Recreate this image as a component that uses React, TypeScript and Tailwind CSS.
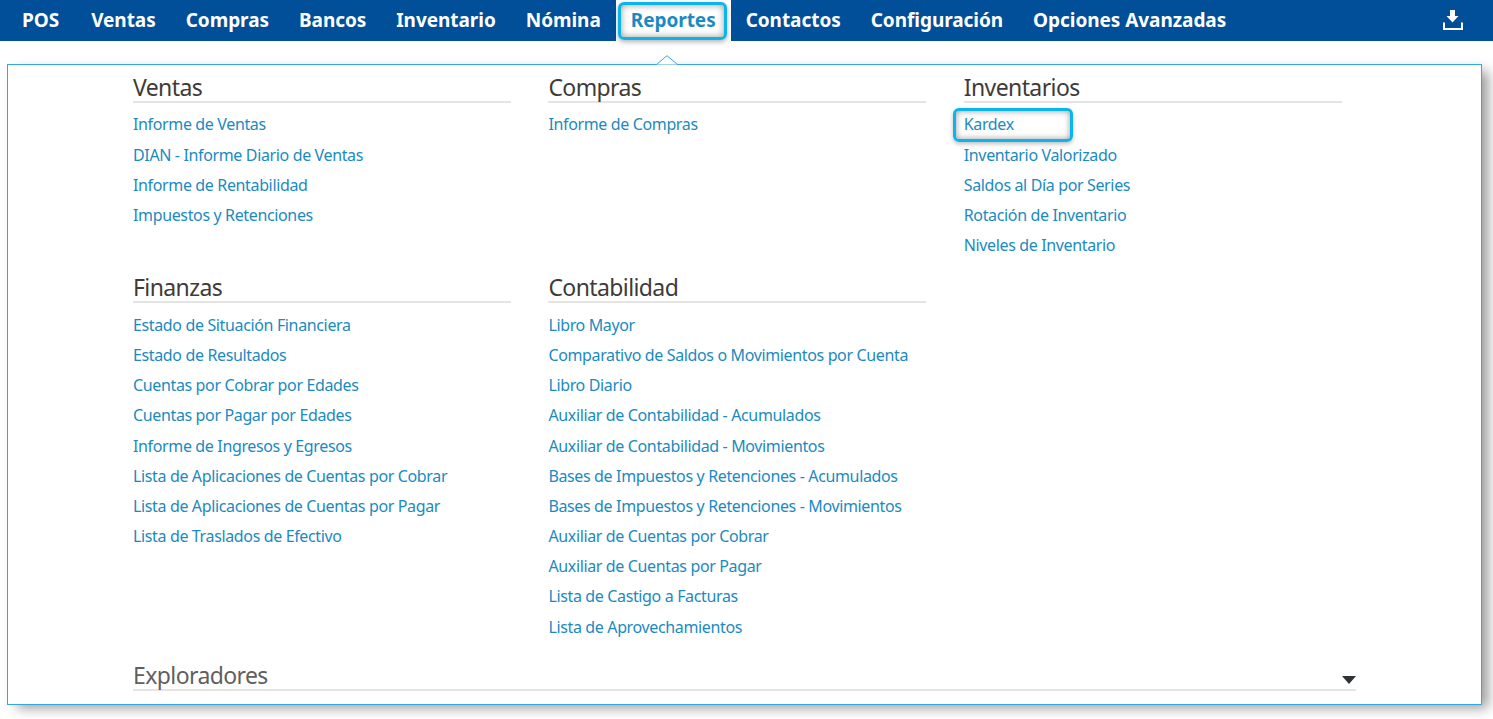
import React from 'react';

const font = "font-['Noto_Sans','Open_Sans',sans-serif]";

const navItems = ['POS', 'Ventas', 'Compras', 'Bancos', 'Inventario', 'Nómina', 'Reportes', 'Contactos', 'Configuración', 'Opciones Avanzadas'];

const Section: React.FC<{ title: string; links: string[]; highlight?: string }> = ({ title, links, highlight }) => (
  <div className="w-[378px]">
    <h3 className="h-[38px] pt-[6px] border-b-2 border-[#e6e3e3] text-[23px] leading-[32px] text-[#403b37] tracking-[-0.6px]">{title}</h3>
    <ul className="pt-[6.4px]">
      {links.map((l) => (
        <li key={l} className="relative h-[30.2px] text-[16px] leading-[30px] text-[#1b8ac0] tracking-[-0.36px] whitespace-nowrap">
          {l}
          {l === highlight && (
            <span className="absolute left-[-11px] top-[-1px] w-[120px] h-[34px] rounded-[6px] border-[3.5px] border-[#0ab4ec] shadow-[inset_0_0_6px_rgba(0,0,0,0.4),0_2px_4px_rgba(0,0,0,0.25)]" />
          )}
        </li>
      ))}
    </ul>
  </div>
);

export default function App() {
  return (
    <div className={`w-[1493px] h-[719px] overflow-hidden bg-white ${font}`}>
      {/* Top bar */}
      <nav className="h-[41px] bg-[#004f98] flex items-stretch pl-[7px] pr-[30px]">
        {navItems.map((n) =>
          n === 'Reportes' ? (
            <div key={n} className="relative z-10 bg-white px-[15px] flex items-center text-[19px] font-bold tracking-[-0.05px] text-[#1b8ac0]">
              {n}
              <span className="absolute left-[2px] top-[1.5px] w-[109px] h-[38px] rounded-[6px] border-[3.5px] border-[#0ab4ec] shadow-[inset_0_0_7px_rgba(0,0,0,0.4),0_2px_5px_rgba(0,0,0,0.3)]" />
            </div>
          ) : (
            <div key={n} className="px-[15px] first:pr-[17px] flex items-center text-[19px] font-bold tracking-[-0.05px] text-white">{n}</div>
          ),
        )}
        <div className="ml-auto flex items-center pb-[2px]">
          <svg width="20" height="20" viewBox="0 0 20 20" fill="white">
            <path d="M7 0h5v6h3.5L9.5 12.5 3.5 6H7z" />
            <path d="M0 12.5h2V18h16v-5.5h2V20H0z" />
          </svg>
        </div>
      </nav>

      {/* Dropdown panel */}
      <div className="relative ml-[7px] mt-[23px] w-[1475px] h-[641px] border border-[#35a7df] bg-white shadow-[8px_5px_12px_-2px_rgba(0,0,0,0.4)]">
        <svg className="absolute left-[647px] top-[-10px]" width="24" height="11" viewBox="0 0 24 11">
          <path d="M0 9.5h1.5L12 .7l10.5 8.8H24" fill="white" stroke="#35a7df" strokeWidth="1" />
        </svg>
        <div className="pl-[125px]">
          <div className="grid grid-cols-[415.4px_415.4px_378px] grid-rows-[200.4px_380px]">
            <Section title="Ventas" links={['Informe de Ventas', 'DIAN - Informe Diario de Ventas', 'Informe de Rentabilidad', 'Impuestos y Retenciones']} />
            <Section title="Compras" links={['Informe de Compras']} />
            <Section title="Inventarios" highlight="Kardex" links={['Kardex', 'Inventario Valorizado', 'Saldos al Día por Series', 'Rotación de Inventario', 'Niveles de Inventario']} />
            <Section title="Finanzas" links={['Estado de Situación Financiera', 'Estado de Resultados', 'Cuentas por Cobrar por Edades', 'Cuentas por Pagar por Edades', 'Informe de Ingresos y Egresos', 'Lista de Aplicaciones de Cuentas por Cobrar', 'Lista de Aplicaciones de Cuentas por Pagar', 'Lista de Traslados de Efectivo']} />
            <Section title="Contabilidad" links={['Libro Mayor', 'Comparativo de Saldos o Movimientos por Cuenta', 'Libro Diario', 'Auxiliar de Contabilidad - Acumulados', 'Auxiliar de Contabilidad - Movimientos', 'Bases de Impuestos y Retenciones - Acumulados', 'Bases de Impuestos y Retenciones - Movimientos', 'Auxiliar de Cuentas por Cobrar', 'Auxiliar de Cuentas por Pagar', 'Lista de Castigo a Facturas', 'Lista de Aprovechamientos']} />
          </div>
          <div className="relative w-[1223px] h-[45.6px] pt-[13.6px] border-b-2 border-[#e6e3e3] text-[23px] leading-[32px] text-[#5f5f5f] tracking-[-0.6px]">
            Exploradores
            <span className="absolute right-0 top-[31px] w-0 h-0 border-x-[7px] border-x-transparent border-t-[8px] border-t-[#2f3336]" />
          </div>
        </div>
      </div>
    </div>
  );
}
